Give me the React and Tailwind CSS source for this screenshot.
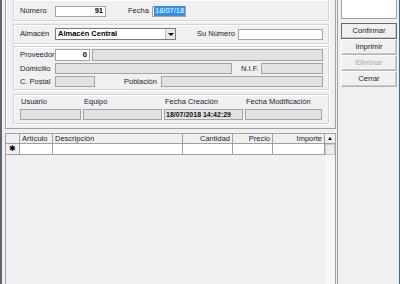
import React from "react";

const font = { fontFamily: '"Liberation Sans", Arial, sans-serif' };

function Label({ children, w, className = "" }) {
  return (
    <div className={`shrink-0 text-[7.5px] leading-none text-[#1e2036] whitespace-nowrap ${className}`} style={w ? { width: w } : undefined}>
      {children}
    </div>
  );
}

function Field({ w, h = 11, white = false, children, className = "" }) {
  return (
    <div
      className={`shrink-0 border border-[#a3a3a3] flex items-center ${white ? "bg-white" : "bg-[#e2e2e2]"} ${className}`}
      style={{ width: w, height: h }}
    >
      {children}
    </div>
  );
}

function Group({ className = "", children }) {
  return (
    <div className={`border border-[#d4d4d4] shadow-[inset_1px_1px_0_#ffffff,1px_1px_0_#ffffff] ${className}`}>
      {children}
    </div>
  );
}

function Btn({ children, disabled, def }) {
  return (
    <div
      className={`h-[16px] w-[56px] flex items-center justify-center text-[7.5px] border ${
        def ? "border-[#6b6b6b]" : "border-[#b5b5b5] border-t-white border-l-white"
      } ${disabled ? "text-[#a8a8a8]" : "text-[#1e2036]"} bg-[#f0f0f0] shadow-[inset_-1px_-1px_0_#c8c8c8]`}
    >
      {children}
    </div>
  );
}

export default function App() {
  return (
    <div className="w-[400px] h-[284px] bg-[#f0f0f0] flex overflow-hidden border-l-2 border-l-[#5b6470] border-r border-r-[#2b6f98]" style={font}>
      {/* Left column */}
      <div className="w-[334px] shrink-0 flex flex-col pl-[3px]">
        {/* Upper frame */}
        <div className="h-[129px] shrink-0 border border-t-0 border-[#a0a0a0] border-b-[#a0a0a0] shadow-[inset_1px_0_0_#ffffff] flex flex-col pl-[7px] pr-[6px] mt-[0px]">
          {/* Group 1 */}
          <Group className="h-[21px] border-t-0 flex items-center pl-[6px] pt-[2px]">
            <Label w={35}>Número</Label>
            <Field w={51} h={11} white className="justify-end pr-[2px]">
              <span className="text-[7.5px] font-bold text-black leading-none">91</span>
            </Field>
            <Label w={24} className="ml-[22px]">Fecha</Label>
            <Field w={34} h={11} white className="pl-[1px]">
              <span className="text-[7.5px] leading-none bg-[#3390e8] text-white px-[1px] py-[1px]">18/07/18</span>
            </Field>
          </Group>
          {/* Group 2 */}
          <Group className="h-[20px] mt-[3px] flex items-center pl-[6px]">
            <Label w={35}>Almacén</Label>
            <div className="w-[121px] h-[12px] border border-[#7a7a7a] bg-white flex items-center">
              <span className="flex-1 pl-[2px] text-[7.5px] font-bold text-black leading-none">Almacén Central</span>
              <div className="w-[10px] h-[10px] bg-[#e8e8e8] border-l border-[#c0c0c0] flex items-center justify-center">
                <div className="w-0 h-0 border-l-[3px] border-r-[3px] border-t-[3px] border-l-transparent border-r-transparent border-t-black" />
              </div>
            </div>
            <Label w={41} className="ml-[21px]">Su Número</Label>
            <Field w={85} h={11} white />
          </Group>
          {/* Group 3 */}
          <Group className="h-[44px] mt-[2px] flex flex-col pl-[6px] pt-[2px]">
            <div className="flex items-center h-[12px]">
              <Label w={35}>Proveedor</Label>
              <Field w={35} h={12} white className="justify-end pr-[2px]">
                <span className="text-[7.5px] font-bold text-black leading-none">0</span>
              </Field>
              <Field w={231} h={12} className="ml-[2px]" />
            </div>
            <div className="flex items-center h-[11px] mt-[2px]">
              <Label w={35}>Domicilio</Label>
              <Field w={177} h={11} />
              <Label w={20} className="ml-[9px]">N.I.F.</Label>
              <Field w={62} h={11} />
            </div>
            <div className="flex items-center h-[11px] mt-[2px]">
              <Label w={35}>C. Postal</Label>
              <Field w={40} h={11} />
              <Label w={37} className="ml-[29px]">Población</Label>
              <Field w={162} h={11} />
            </div>
          </Group>
          {/* Group 4 */}
          <Group className="h-[30px] mt-[4px] flex pl-[6px] pt-[3px] gap-[2px]">
            {[
              ["Usuario", 61, null],
              ["Equipo", 79, null],
              ["Fecha Creación", 79, "18/07/2018 14:42:29"],
              ["Fecha Modificación", 77, null],
            ].map(([l, w, v]) => (
              <div key={l} className="flex flex-col gap-[4px]" style={{ width: w }}>
                <Label className="h-[7px] pl-[1px]">{l}</Label>
                <Field w={w} h={11} className="pl-[1px]">
                  {v && <span className="text-[7px] font-bold text-[#111] leading-none whitespace-nowrap">{v}</span>}
                </Field>
              </div>
            ))}
          </Group>
        </div>
        {/* Grid */}
        <div className="mt-[4px] flex-1 border border-b-0 border-[#a0a0a0] flex flex-col bg-[#f0f0f0]">
          <div className="flex h-[10px] text-[7.5px] leading-none text-[#1e2036] border-b border-[#a0a0a0]">
            <div className="w-[14px] border-r border-[#a0a0a0]" />
            <div className="w-[33px] border-r border-[#a0a0a0] flex items-center pl-[2px]">Artículo</div>
            <div className="w-[130px] border-r border-[#a0a0a0] flex items-center pl-[2px]">Descripción</div>
            <div className="w-[50px] border-r border-[#a0a0a0] flex items-center justify-end pr-[2px]">Cantidad</div>
            <div className="w-[40px] border-r border-[#a0a0a0] flex items-center justify-end pr-[2px]">Precio</div>
            <div className="w-[52px] border-r border-[#a0a0a0] flex items-center justify-end pr-[2px]">Importe</div>
            <div className="w-[10px] flex items-center justify-center">
              <div className="w-0 h-0 border-l-[2.5px] border-r-[2.5px] border-b-[3px] border-l-transparent border-r-transparent border-b-black" />
            </div>
          </div>
          <div className="flex flex-1">
            <div className="flex flex-col flex-1">
              <div className="flex h-[11px] border-b border-[#a0a0a0]">
                <div className="w-[14px] border-r border-[#a0a0a0] flex items-center justify-center text-[8px] leading-none text-black">✱</div>
                <div className="w-[33px] bg-white border-r border-[#a0a0a0]" />
                <div className="w-[130px] bg-white border-r border-[#a0a0a0]" />
                <div className="w-[50px] bg-white border-r border-[#a0a0a0]" />
                <div className="w-[40px] bg-white border-r border-[#a0a0a0]" />
                <div className="w-[52px] bg-white border-r border-[#a0a0a0]" />
              </div>
            </div>
            <div className="w-[10px] bg-[#f7f7f7] flex flex-col">
              <div className="h-[11px] border border-[#c8c8c8] bg-[#ececec]" />
            </div>
          </div>
        </div>
      </div>
      {/* Right column */}
      <div className="flex-1 flex flex-col pl-[3px] border-l border-[#a0a0a0] ml-[1px]">
        <div className="w-[56px] h-[19px] bg-white border border-t-0 border-[#a0a0a0]" />
        <div className="mt-[4px] flex flex-col">
          <Btn def>Confirmar</Btn>
          <Btn>Imprimir</Btn>
          <Btn disabled>Eliminar</Btn>
          <Btn>Cerrar</Btn>
        </div>
      </div>
    </div>
  );
}
